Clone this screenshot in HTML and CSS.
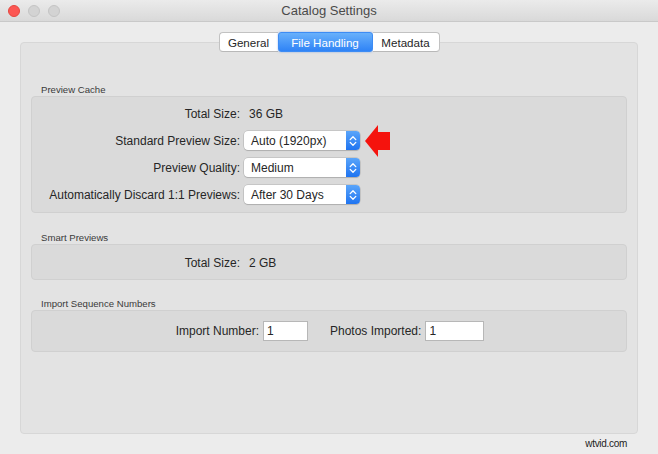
FILE: index.html
```html
<!DOCTYPE html>
<html>
<head>
<meta charset="utf-8">
<link rel="stylesheet" href="styles.css">
</head>
<body>
<div class="window">
  <div class="titlebar">
    <div class="lights">
      <span class="light red"></span>
      <span class="light"></span>
      <span class="light"></span>
    </div>
    <div class="title">Catalog Settings</div>
    <div></div>
  </div>
  <div class="content">
    <div class="tabs">
      <div class="tab tab-first">General</div>
      <div class="tab tab-active">File Handling</div>
      <div class="tab tab-last">Metadata</div>
    </div>
    <div class="panel">
      <div class="section">
        <div class="section-label">Preview Cache</div>
        <div class="group grid-group">
          <div class="label">Total Size:</div>
          <div class="value"><span class="value-text">36 GB</span></div>
          <div class="label">Standard Preview Size:</div>
          <div class="value">
            <div class="popup"><span class="popup-text">Auto (1920px)</span><span class="stepper"><svg width="8" height="12" viewBox="0 0 8 12"><path d="M1.2 4.6 L4 1.8 L6.8 4.6 M1.2 7.4 L4 10.2 L6.8 7.4" fill="none" stroke="#fff" stroke-width="1.3" stroke-linecap="round" stroke-linejoin="round"/></svg></span></div>
            <svg class="arrow" width="26" height="32" viewBox="0 0 26 32"><polygon points="0,16 13,0 13,7 25,7 25,25 13,25 13,32" fill="#f5130d"/></svg>
          </div>
          <div class="label">Preview Quality:</div>
          <div class="value">
            <div class="popup"><span class="popup-text">Medium</span><span class="stepper"><svg width="8" height="12" viewBox="0 0 8 12"><path d="M1.2 4.6 L4 1.8 L6.8 4.6 M1.2 7.4 L4 10.2 L6.8 7.4" fill="none" stroke="#fff" stroke-width="1.3" stroke-linecap="round" stroke-linejoin="round"/></svg></span></div>
          </div>
          <div class="label">Automatically Discard 1:1 Previews:</div>
          <div class="value">
            <div class="popup"><span class="popup-text">After 30 Days</span><span class="stepper"><svg width="8" height="12" viewBox="0 0 8 12"><path d="M1.2 4.6 L4 1.8 L6.8 4.6 M1.2 7.4 L4 10.2 L6.8 7.4" fill="none" stroke="#fff" stroke-width="1.3" stroke-linecap="round" stroke-linejoin="round"/></svg></span></div>
          </div>
        </div>
      </div>
      <div class="section section-smart">
        <div class="section-label">Smart Previews</div>
        <div class="group grid-group group-smart">
          <div class="label">Total Size:</div>
          <div class="value"><span class="value-text">2 GB</span></div>
        </div>
      </div>
      <div class="section section-import">
        <div class="section-label">Import Sequence Numbers</div>
        <div class="group group-import">
          <div class="field">
            <span class="field-label">Import Number:</span>
            <div class="input input-short">1</div>
          </div>
          <div class="field">
            <span class="field-label">Photos Imported:</span>
            <div class="input input-long">1</div>
          </div>
        </div>
      </div>
    </div>
    <div class="footer">wtvid.com</div>
  </div>
</div>
</body>
</html>
```

FILE: styles.css
```css
* {
  box-sizing: border-box;
}
html, body {
  margin: 0;
  padding: 0;
}
body {
  font-family: "Liberation Sans", Arial, sans-serif;
  color: #262626;
  background: #ececec;
}
.window {
  width: 658px;
  height: 454px;
  background: #ececec;
  display: flex;
  flex-direction: column;
  overflow: hidden;
}
.titlebar {
  flex-shrink: 0;
  height: 22px;
  border-bottom: 1px solid #c9c9c9;
  background: linear-gradient(#ebebeb, #d9d9d9);
  display: grid;
  grid-template-columns: 1fr auto 1fr;
  align-items: center;
}
.lights {
  display: flex;
  gap: 8px;
  padding-left: 8px;
}
.light {
  width: 12px;
  height: 12px;
  border-radius: 50%;
  background: #d3d3d3;
  border: 1px solid #c4c4c4;
}
.light.red {
  background: #fc5753;
  border-color: #e5473f;
}
.title {
  font-size: 13px;
  color: #4a4a4a;
}
.content {
  flex: 1;
  display: flex;
  flex-direction: column;
  padding: 10px 20px 0 20px;
}
.tabs {
  flex-shrink: 0;
  display: flex;
  justify-content: center;
  margin-bottom: -10px;
  position: relative;
  z-index: 1;
  height: 20px;
}
.tab {
  font-size: 11.6px;
  height: 20px;
  line-height: 19px;
  background: #fff;
  border-top: 1px solid #c2c2c2;
  border-bottom: 1px solid #b8b8b8;
  color: #262626;
  text-align: center;
}
.tab-first {
  width: 59px;
  border-left: 1px solid #c2c2c2;
  border-radius: 4px 0 0 4px;
}
.tab-last {
  width: 67px;
  border-right: 1px solid #c2c2c2;
  border-radius: 0 4px 4px 0;
}
.tab-active {
  width: 95px;
  color: #fff;
  background: linear-gradient(#68b0fb, #2f83f6);
  border: 1px solid #3d8cf4;
  border-radius: 3px;
  box-shadow: 0 0 2px rgba(40, 110, 230, 0.5);
}
.panel {
  flex-shrink: 0;
  height: 392px;
  background: #e3e3e3;
  border: 1px solid #d7d7d7;
  border-radius: 4px;
  padding: 41px 10px 0 10px;
}
.section-smart {
  margin-top: 19px;
}
.section-import {
  margin-top: 18px;
}
.section-label {
  font-size: 9.6px;
  line-height: 12px;
  color: #3a3a3a;
  padding-left: 10px;
}
.group {
  background: #dadada;
  border: 1px solid #d0d0d0;
  border-radius: 4px;
}
.grid-group {
  display: grid;
  grid-template-columns: 208px 1fr;
  grid-auto-rows: 27px;
  column-gap: 4px;
  padding: 3px 0 4px;
}
.group-smart {
  padding: 4px 0 3px;
}
.label {
  font-size: 12px;
  text-align: right;
  align-self: center;
}
.value {
  display: flex;
  align-items: center;
  font-size: 12px;
}
.value-text {
  padding-left: 5px;
}
.popup {
  width: 116px;
  height: 19px;
  background: #fff;
  border-radius: 4px;
  box-shadow: 0 0 0 0.5px rgba(0, 0, 0, 0.18), 0 1px 1px rgba(0, 0, 0, 0.12);
  display: flex;
  align-items: center;
  justify-content: space-between;
  overflow: hidden;
}
.popup-text {
  padding-left: 7px;
  font-size: 12px;
}
.stepper {
  width: 14px;
  height: 19px;
  background: linear-gradient(#5aa5fa, #1f74f1);
  display: flex;
  align-items: center;
  justify-content: center;
}
.arrow {
  margin: -3px 0 -3px 5px;
}
.group-import {
  display: flex;
  justify-content: center;
  align-items: center;
  gap: 22px;
  height: 42px;
  padding-left: 2px;
}
.field {
  display: flex;
  align-items: center;
  gap: 4px;
  font-size: 12px;
}
.input {
  height: 20px;
  line-height: 18px;
  background: #fff;
  border: 1px solid #b7b7b7;
  padding-left: 3px;
  font-size: 12px;
}
.input-short {
  width: 45px;
}
.input-long {
  width: 59px;
}
.footer {
  flex-shrink: 0;
  height: 20px;
  line-height: 20px;
  text-align: right;
  padding-right: 11px;
  font-size: 10px;
  color: #222;
  letter-spacing: -0.3px;
}
```
